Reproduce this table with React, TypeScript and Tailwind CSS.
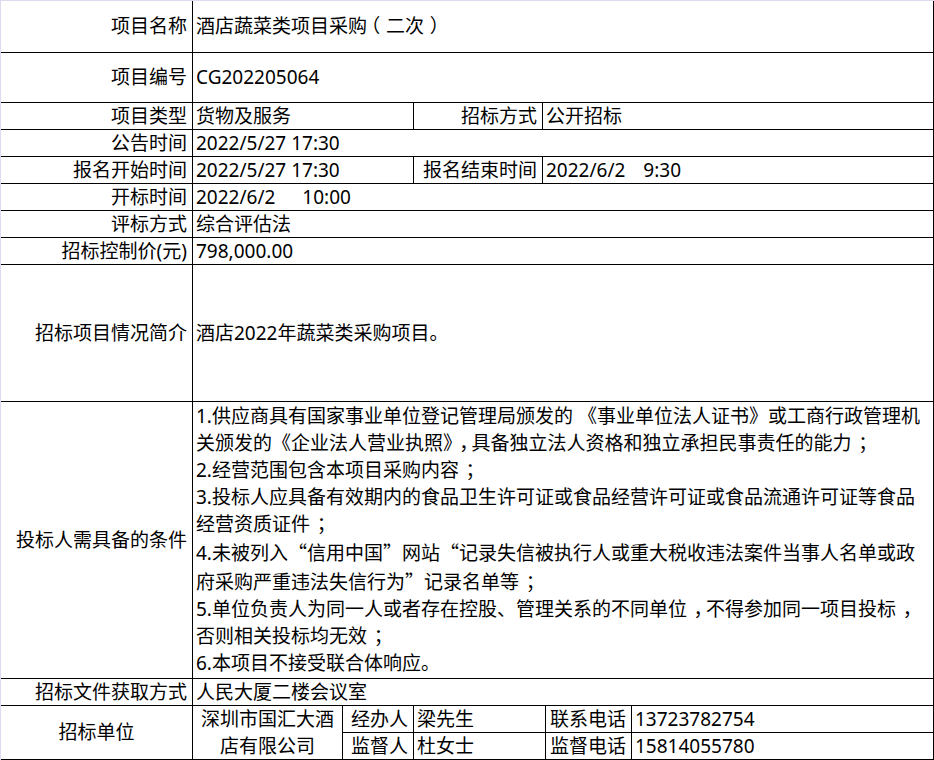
import React from "react";

const cell = "border-r border-b border-black flex items-center";
const label = `${cell} justify-end pr-[5px] whitespace-nowrap`;
const value = `${cell} justify-start pl-[3px] whitespace-pre`;

function Q({ c }: { c: string }) {
  return <span className="font-['Noto_Sans_CJK_SC',sans-serif]">{c}</span>;
}

function C({ c }: { c: string }) {
  return <span className="ml-[0.35em] tracking-[-0.35em]">{c}</span>;
}

export default function App() {
  return (
    <div className="w-[934px] h-[760px] bg-white border-l border-t border-[#dcdcf0] text-black text-[19px] leading-[27px] font-['Noto_Sans','Noto_Sans_CJK_SC',sans-serif] flex flex-col">
      <div className="flex h-[52px]">
        <div className={`${label} w-[192px]`}>项目名称</div>
        <div className={`${value} flex-1`}>
          <span>
            酒店蔬菜类项目采<span className="tracking-[-0.3em]">购</span>
            <span className="tracking-[0.3em]">（</span>二次
            <span className="ml-[0.3em] tracking-[-0.3em]">）</span>
          </span>
        </div>
      </div>
      <div className="flex h-[50px]">
        <div className={`${label} w-[192px]`}>项目编号</div>
        <div className={`${value} flex-1`}>CG202205064</div>
      </div>
      <div className="flex h-[27px]">
        <div className={`${label} w-[192px]`}>项目类型</div>
        <div className={`${value} w-[221px]`}>货物及服务</div>
        <div className={`${label} w-[129px]`}>招标方式</div>
        <div className={`${value} flex-1`}>公开招标</div>
      </div>
      <div className="flex h-[27px]">
        <div className={`${label} w-[192px]`}>公告时间</div>
        <div className={`${value} flex-1`}>2022/5/27 17:30</div>
      </div>
      <div className="flex h-[27px]">
        <div className={`${label} w-[192px]`}>报名开始时间</div>
        <div className={`${value} w-[221px]`}>2022/5/27 17:30</div>
        <div className={`${label} w-[129px]`}>报名结束时间</div>
        <div className={`${value} flex-1`}>
          <span>
            2022/6/2<span className="ml-[18px]">9:30</span>
          </span>
        </div>
      </div>
      <div className="flex h-[27px]">
        <div className={`${label} w-[192px]`}>开标时间</div>
        <div className={`${value} flex-1`}>
          <span>
            2022/6/2<span className="ml-[27px]">10:00</span>
          </span>
        </div>
      </div>
      <div className="flex h-[27px]">
        <div className={`${label} w-[192px]`}>评标方式</div>
        <div className={`${value} flex-1`}>综合评估法</div>
      </div>
      <div className="flex h-[27px]">
        <div className={`${label} w-[192px]`}>招标控制价(元)</div>
        <div className={`${value} flex-1`}>798,000.00</div>
      </div>
      <div className="flex h-[137px]">
        <div className={`${label} w-[192px]`}>招标项目情况简介</div>
        <div className={`${value} flex-1`}>酒店2022年蔬菜类采购项目。</div>
      </div>
      <div className="flex h-[277px]">
        <div className={`${label} w-[192px]`}>投标人需具备的条件</div>
        <div className={`${cell} flex-1 pl-[3px]`}>
          <div className="flex flex-col whitespace-nowrap">
            <div>1.供应商具有国家事业单位登记管理局颁发的 《事业单位法人证书》或工商行政管理机</div>
            <div>
              关颁发的《企业法人营业执照》<C c="，" />具备独立法人资格和独立承担民事责任的能力<C c="；" />
            </div>
            <div>
              2.经营范围包含本项目采购内容<C c="；" />
            </div>
            <div>3.投标人应具备有效期内的食品卫生许可证或食品经营许可证或食品流通许可证等食品</div>
            <div>
              经营资质证件<C c="；" />
            </div>
            <div>
              4.未被列入<Q c="“" />信用中国<Q c="”" />网站<Q c="“" />记录失信被执行人或重大税收违法案件当事人名单或政
            </div>
            <div>
              府采购严重违法失信行为<Q c="”" />记录名单等<C c="；" />
            </div>
            <div>
              5.单位负责人为同一人或者存在控股、管理关系的不同单位<C c="，" />不得参加同一项目投标<C c="，" />
            </div>
            <div>
              否则相关投标均无效<C c="；" />
            </div>
            <div>6.本项目不接受联合体响应。</div>
          </div>
        </div>
      </div>
      <div className="flex h-[27px]">
        <div className={`${label} w-[192px]`}>招标文件获取方式</div>
        <div className={`${value} flex-1`}>人民大厦二楼会议室</div>
      </div>
      <div className="flex h-[54px]">
        <div className={`${cell} w-[192px] justify-center`}>招标单位</div>
        <div className={`${cell} w-[150px] justify-center text-center`}>
          <div>
            深圳市国汇大酒
            <br />
            店有限公司
          </div>
        </div>
        <div className="flex-1 flex flex-col">
          <div className="flex h-[27px]">
            <div className={`${label} w-[71px]`}>经办人</div>
            <div className={`${value} w-[132px]`}>梁先生</div>
            <div className={`${label} w-[86px]`}>联系电话</div>
            <div className={`${value} flex-1`}>13723782754</div>
          </div>
          <div className="flex h-[27px]">
            <div className={`${label} w-[71px]`}>监督人</div>
            <div className={`${value} w-[132px]`}>杜女士</div>
            <div className={`${label} w-[86px]`}>监督电话</div>
            <div className={`${value} flex-1`}>15814055780</div>
          </div>
        </div>
      </div>
    </div>
  );
}
